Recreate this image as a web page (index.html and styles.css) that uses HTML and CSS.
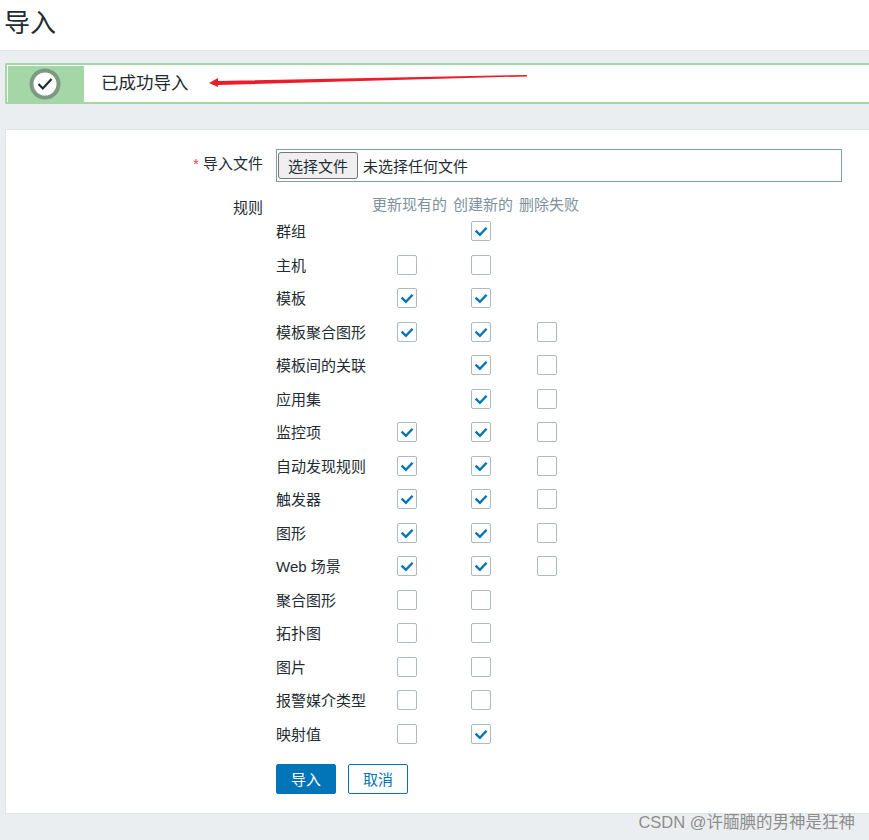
FILE: index.html
```html
<!DOCTYPE html>
<html lang="zh-CN">

<head>
    <meta charset="UTF-8">
    <title>导入</title>
    <link rel="stylesheet" href="styles.css">
</head>

<body>
    <svg width="0" height="0" class="defs">
        <symbol id="tick" viewBox="0 0 20 20">
            <path d="M4 9.5 L8.8 14.3 L16.2 6.3" fill="none" stroke="#0275b8" stroke-width="2.6"></path>
        </symbol>
    </svg>

    <header class="top">
        <h1>导入</h1>
    </header>

    <div class="msg">
        <div class="msg-icon">
            <svg width="32" height="32" viewBox="0 0 32 32">
                <circle cx="16" cy="16" r="13.5" fill="#fff" stroke="#7b9a80" stroke-width="4"></circle>
                <path d="M9.5 16 L13.8 20.5 L22.5 11" fill="none" stroke="#1f2c33" stroke-width="2.2"></path>
            </svg>
        </div>
        <div class="msg-text">已成功导入</div>
    </div>

    <!-- red arrow drawn on top of the screenshot -->
    <svg class="arrow" width="330" height="24" viewBox="0 0 330 24">
        <path d="M318 5 L318 6.4 L9 15 L9 17 L0 13 L9 8 L9 11 Z" fill="#ee1c2a"></path>
    </svg>

    <form class="card">
        <div class="field">
            <label class="field-label"><span class="req">*</span> 导入文件</label>
            <div class="file-box">
                <button type="button" class="file-btn">选择文件</button>
                <span class="file-name">未选择任何文件</span>
            </div>
        </div>

        <div class="field rules-field">
            <label class="field-label rules-label">规则</label>
            <div class="rules">
                <div class="rule head">
                    <span></span>
                    <span class="col-title">更新现有的</span>
                    <span class="col-title">创建新的</span>
                    <span class="col-title">删除失败</span>
                </div>

                <div class="rule">
                    <span class="name">群组</span>
                    <span></span>
                    <span class="cb c2"><svg><use href="#tick"></use></svg></span>
                    <span></span>
                </div>
                <div class="rule">
                    <span class="name">主机</span>
                    <span class="cb c1"></span>
                    <span class="cb c2"></span>
                    <span></span>
                </div>
                <div class="rule">
                    <span class="name">模板</span>
                    <span class="cb c1"><svg><use href="#tick"></use></svg></span>
                    <span class="cb c2"><svg><use href="#tick"></use></svg></span>
                    <span></span>
                </div>
                <div class="rule">
                    <span class="name">模板聚合图形</span>
                    <span class="cb c1"><svg><use href="#tick"></use></svg></span>
                    <span class="cb c2"><svg><use href="#tick"></use></svg></span>
                    <span class="cb c3"></span>
                </div>
                <div class="rule">
                    <span class="name">模板间的关联</span>
                    <span></span>
                    <span class="cb c2"><svg><use href="#tick"></use></svg></span>
                    <span class="cb c3"></span>
                </div>
                <div class="rule">
                    <span class="name">应用集</span>
                    <span></span>
                    <span class="cb c2"><svg><use href="#tick"></use></svg></span>
                    <span class="cb c3"></span>
                </div>
                <div class="rule">
                    <span class="name">监控项</span>
                    <span class="cb c1"><svg><use href="#tick"></use></svg></span>
                    <span class="cb c2"><svg><use href="#tick"></use></svg></span>
                    <span class="cb c3"></span>
                </div>
                <div class="rule">
                    <span class="name">自动发现规则</span>
                    <span class="cb c1"><svg><use href="#tick"></use></svg></span>
                    <span class="cb c2"><svg><use href="#tick"></use></svg></span>
                    <span class="cb c3"></span>
                </div>
                <div class="rule">
                    <span class="name">触发器</span>
                    <span class="cb c1"><svg><use href="#tick"></use></svg></span>
                    <span class="cb c2"><svg><use href="#tick"></use></svg></span>
                    <span class="cb c3"></span>
                </div>
                <div class="rule">
                    <span class="name">图形</span>
                    <span class="cb c1"><svg><use href="#tick"></use></svg></span>
                    <span class="cb c2"><svg><use href="#tick"></use></svg></span>
                    <span class="cb c3"></span>
                </div>
                <div class="rule">
                    <span class="name">Web 场景</span>
                    <span class="cb c1"><svg><use href="#tick"></use></svg></span>
                    <span class="cb c2"><svg><use href="#tick"></use></svg></span>
                    <span class="cb c3"></span>
                </div>
                <div class="rule">
                    <span class="name">聚合图形</span>
                    <span class="cb c1"></span>
                    <span class="cb c2"></span>
                    <span></span>
                </div>
                <div class="rule">
                    <span class="name">拓扑图</span>
                    <span class="cb c1"></span>
                    <span class="cb c2"></span>
                    <span></span>
                </div>
                <div class="rule">
                    <span class="name">图片</span>
                    <span class="cb c1"></span>
                    <span class="cb c2"></span>
                    <span></span>
                </div>
                <div class="rule">
                    <span class="name">报警媒介类型</span>
                    <span class="cb c1"></span>
                    <span class="cb c2"></span>
                    <span></span>
                </div>
                <div class="rule">
                    <span class="name">映射值</span>
                    <span class="cb c1"></span>
                    <span class="cb c2"><svg><use href="#tick"></use></svg></span>
                    <span></span>
                </div>
            </div>
        </div>

        <div class="actions">
            <button type="button" class="btn primary">导入</button>
            <button type="button" class="btn">取消</button>
        </div>
    </form>

    <div class="watermark">CSDN @许腼腆的男神是狂神</div>
</body>

</html>
```

FILE: styles.css
```css
html,
body {
    height: 840px;
    overflow: hidden;
}

body {
    margin: 0;
    background-color: #ebeef0;
    color: #1f2c33;
    font-family: "Liberation Sans", "Noto Sans CJK SC", sans-serif;
    font-size: 15px;
    position: relative;
}

.defs {
    position: absolute;
}

.top {
    background: white;
    height: 50px;
    border-bottom: 1px solid #dfe4e7;
    padding-left: 4px;
}

h1 {
    margin: 0;
    font-size: 26px;
    font-weight: normal;
    line-height: 46px;
}

.msg {
    margin: 12px 0 0 5px;
    height: 41px;
    box-sizing: border-box;
    display: flex;
    align-items: stretch;
    background: white;
    border: 2px solid #a5d6a7;
    border-right: none;
    border-radius: 2px 0 0 2px;
    padding: 1px 0 0 1px;
}

.msg-icon {
    width: 76px;
    box-sizing: border-box;
    padding-right: 3px;
    background-color: #a5d6a7;
    display: flex;
    align-items: center;
    justify-content: center;
}

.msg-text {
    margin-left: 17px;
    font-size: 17.5px;
    line-height: 35px;
}

.arrow {
    position: absolute;
    left: 209px;
    top: 70px;
}

.card {
    margin: 25px 0 0 5px;
    height: 685px;
    box-sizing: border-box;
    background: white;
    border: 1px solid #dfe4e7;
    border-right: none;
    padding-top: 19px;
}

.field {
    display: flex;
}

.field-label {
    width: 257px;
    text-align: right;
    margin-right: 13px;
    line-height: 29px;
}

.req {
    color: #d64e4e;
}

.file-box {
    width: 566px;
    height: 33px;
    box-sizing: border-box;
    border: 1px solid #7f9cab;
    display: flex;
    align-items: center;
    padding-left: 1px;
}

.file-btn {
    width: 80px;
    height: 27px;
    padding: 0 0 1px;
    background: #efefef;
    border: 1px solid #767676;
    border-radius: 3px;
    color: #1f2c33;
    font: inherit;
}

.file-name {
    margin-left: 5px;
}

.rules-field {
    margin-top: 12px;
}

.rules-label {
    line-height: 28px;
}

.rule {
    display: grid;
    grid-template-columns: 96px 81px 66px 66px;
    grid-template-rows: 33.5px;
    align-items: center;
    line-height: 20px;
}

.rule.head {
    grid-template-rows: 20.5px;
    align-items: start;
    line-height: 22px;
}

.name {
    padding-top: 2px;
}

.col-title {
    color: #7e929e;
    white-space: nowrap;
}

.cb {
    display: block;
    width: 20px;
    height: 20px;
    box-sizing: border-box;
    border: 1px solid #acbbc2;
    border-radius: 2px;
    background: white;
}

.cb svg {
    display: block;
    width: 18px;
    height: 18px;
}

.c1 {
    margin-left: 25px;
}

.c2,
.c3 {
    margin-left: 18px;
}

.actions {
    margin: 13px 0 0 270px;
    display: flex;
    gap: 12px;
}

.btn {
    width: 60px;
    height: 30px;
    padding: 0;
    background: white;
    border: 1px solid #0275b8;
    border-radius: 2px;
    color: #0275b8;
    font: inherit;
}

.btn.primary {
    background-color: #0275b8;
    color: white;
}

.watermark {
    position: absolute;
    right: 14px;
    top: 812px;
    font-size: 16.5px;
    line-height: 20px;
    color: #8d8d8d;
    white-space: nowrap;
}
```
